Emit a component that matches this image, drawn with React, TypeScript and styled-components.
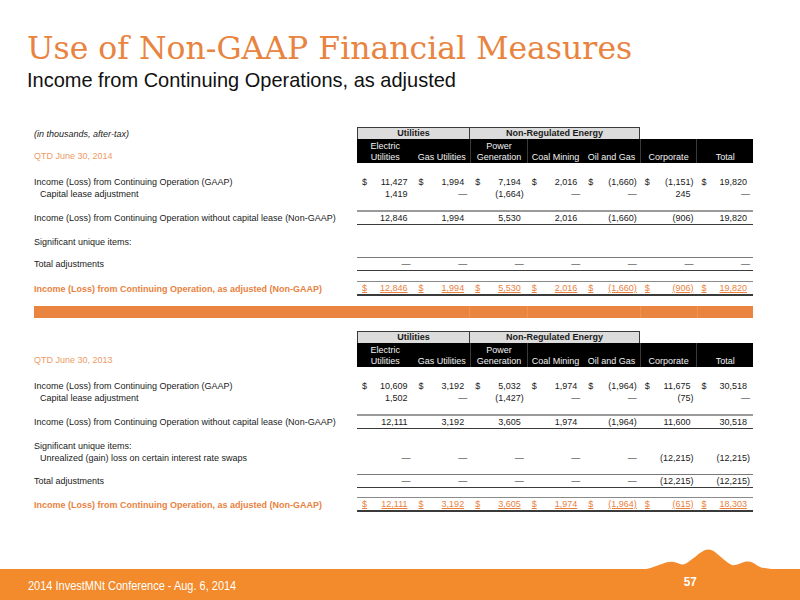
import styled, { createGlobalStyle } from 'styled-components';

const GlobalStyle = createGlobalStyle`
  html, body {
    margin: 0;
    padding: 0;
    background: #ffffff;
  }
  body {
    font-family: 'Liberation Sans', Arial, sans-serif;
  }
`;

type Kind = 'plain' | 'subtotal' | 'adjust' | 'total';

interface Line {
	label: string;
	values?: string[];
	dollar?: boolean;
	kind?: Kind;
	indent?: boolean;
	gap?: number;
}

interface Section {
	note?: string;
	period: string;
	lines: Line[];
}

const dash = '—';
const blanks = [dash, dash, dash, dash, dash, dash, dash];

const sections: Section[] = [
	{
		note: '(in thousands, after-tax)',
		period: 'QTD June 30, 2014',
		lines: [
			{
				label: 'Income (Loss) from Continuing Operation (GAAP)',
				values: ['11,427', '1,994', '7,194', '2,016', '(1,660)', '(1,151)', '19,820'],
				dollar: true,
				gap: 13,
			},
			{
				label: 'Capital lease adjustment',
				values: ['1,419', dash, '(1,664)', dash, dash, '245', dash],
				indent: true,
			},
			{
				label: 'Income (Loss) from Continuing Operation without capital lease (Non-GAAP)',
				values: ['12,846', '1,994', '5,530', '2,016', '(1,660)', '(906)', '19,820'],
				kind: 'subtotal',
				gap: 10,
			},
			{ label: 'Significant unique items:', gap: 13 },
			{ label: 'Total adjustments', values: blanks, kind: 'adjust', gap: 9 },
			{
				label: 'Income (Loss) from Continuing Operation, as adjusted (Non-GAAP)',
				values: ['12,846', '1,994', '5,530', '2,016', '(1,660)', '(906)', '19,820'],
				dollar: true,
				kind: 'total',
				gap: 11,
			},
		],
	},
	{
		period: 'QTD June 30, 2013',
		lines: [
			{
				label: 'Income (Loss) from Continuing Operation (GAAP)',
				values: ['10,609', '3,192', '5,032', '1,974', '(1,964)', '11,675', '30,518'],
				dollar: true,
				gap: 13,
			},
			{
				label: 'Capital lease adjustment',
				values: ['1,502', dash, '(1,427)', dash, dash, '(75)', dash],
				indent: true,
			},
			{
				label: 'Income (Loss) from Continuing Operation without capital lease (Non-GAAP)',
				values: ['12,111', '3,192', '3,605', '1,974', '(1,964)', '11,600', '30,518'],
				kind: 'subtotal',
				gap: 10,
			},
			{ label: 'Significant unique items:', gap: 13 },
			{
				label: 'Unrealized (gain) loss on certain interest rate swaps',
				values: [dash, dash, dash, dash, dash, '(12,215)', '(12,215)'],
				indent: true,
			},
			{
				label: 'Total adjustments',
				values: [dash, dash, dash, dash, dash, '(12,215)', '(12,215)'],
				kind: 'adjust',
				gap: 10,
			},
			{
				label: 'Income (Loss) from Continuing Operation, as adjusted (Non-GAAP)',
				values: ['12,111', '3,192', '3,605', '1,974', '(1,964)', '(615)', '18,303'],
				dollar: true,
				kind: 'total',
				gap: 10,
			},
		],
	},
];

const columns = [
	['Electric', 'Utilities'],
	['', 'Gas Utilities'],
	['Power', 'Generation'],
	['', 'Coal Mining'],
	['', 'Oil and Gas'],
	['', 'Corporate'],
	['', 'Total'],
];

// columns that start a new block get a faint divider
const divided = [2, 3, 5, 6];

const Money = ({ value, dollar }: { value: string; dollar?: boolean }) => (
	<Cell>
		<Dollar>{dollar ? '$' : ''}</Dollar>
		<Amount $paren={value.endsWith(')') || value === dash}>{value}</Amount>
	</Cell>
);

const TableSection = ({ section }: { section: Section }) => (
	<SectionBox>
		<GroupRow>
			<Note>{section.note}</Note>
			<GroupCell $span={2}>Utilities</GroupCell>
			<GroupCell $span={3}>Non-Regulated Energy</GroupCell>
		</GroupRow>
		<HeadRow>
			<Period>{section.period}</Period>
			{columns.map((c, i) => (
				<HeadCell key={c[1]} $divided={divided.includes(i)}>
					<span>{c[0] || '\u00a0'}</span>
					<span>{c[1]}</span>
				</HeadCell>
			))}
		</HeadRow>
		{section.lines.map((line) => (
			<DataRow key={line.label} $kind={line.kind || 'plain'} style={{ marginTop: line.gap || 0 }}>
				<Label $indent={line.indent} $total={line.kind === 'total'}>
					{line.label}
				</Label>
				{line.values?.map((v, i) => (
					<Money key={i} value={v} dollar={line.dollar} />
				))}
			</DataRow>
		))}
	</SectionBox>
);

const App = () => (
	<>
		<GlobalStyle />
		<Page>
			<Header>
				<Title>Use of Non-GAAP Financial Measures</Title>
				<Subtitle>Income from Continuing Operations, as adjusted</Subtitle>
			</Header>
			<Table>
				<TableSection section={sections[0]} />
				<Divider>
					{[0, 1, 2, 3, 4].map((i) => (
						<DividerPart key={i} $first={i === 0} />
					))}
				</Divider>
				<TableSection section={sections[1]} />
			</Table>
			<Footer>
				<Mountain viewBox="620 544 180 26" width="180" height="26">
					<path
						d="M620 571 L640 570 C650 569 655 566 662 564 C667 562 672 561 676 562.5 C680 564 682 565.5 686 563.5 C692 560 699 553 704 550.5 C708 548.5 712 549.5 715 552 C720 556 727 563 732 565 C736 566 741 562.5 746 561.5 C751 561 754 563 758 566 C763 569 775 570 800 570 L800 571 Z"
						fill="#F38A2B"
					/>
				</Mountain>
				<FooterText>2014 InvestMNt Conference - Aug. 6, 2014</FooterText>
				<PageNo>57</PageNo>
			</Footer>
		</Page>
	</>
);

const Page = styled.div`
	width: 800px;
	height: 600px;
	display: flex;
	flex-direction: column;
	overflow: hidden;
`;

const Header = styled.header`
	padding: 30px 0 0 27px;
`;

const Title = styled.h1`
	margin: 0;
	font-family: 'DejaVu Serif', serif;
	font-weight: normal;
	font-size: 31.5px;
	line-height: 36px;
	color: #e8843f;
`;

const Subtitle = styled.h2`
	margin: 2px 0 0;
	font-family: 'Liberation Sans', sans-serif;
	font-weight: normal;
	font-size: 21px;
	line-height: 24px;
	color: #111111;
	transform: scaleX(0.952);
	transform-origin: left center;
`;

const Table = styled.div`
	margin: 35px 0 0 34px;
	width: 719px;
	display: flex;
	flex-direction: column;
	font-size: 9px;
	color: #1a1a1a;
`;

const SectionBox = styled.div`
	display: flex;
	flex-direction: column;
`;

const Grid = styled.div`
	display: grid;
	grid-template-columns: 323px repeat(7, 1fr);
`;

const GroupRow = styled(Grid)`
	height: 12px;
`;

const Note = styled.div`
	font-style: italic;
	line-height: 14px;
`;

const GroupCell = styled.div<{ $span: number }>`
	grid-column: span ${(p) => p.$span};
	background: #dcdcdc;
	border: 1.5px solid #3a3a3a;
	border-bottom: none;
	font-weight: bold;
	text-align: center;
	line-height: 11px;
	& + & {
		border-left: none;
	}
`;

const HeadRow = styled(Grid)`
	height: 24px;
`;

const Period = styled.div`
	align-self: end;
	color: #ee9a66;
	line-height: 11px;
	padding-bottom: 1px;
`;

const HeadCell = styled.div<{ $divided: boolean }>`
	background: #000000;
	color: #f2f2f2;
	display: flex;
	flex-direction: column;
	justify-content: flex-end;
	align-items: center;
	line-height: 11px;
	white-space: nowrap;
	border-left: ${(p) => (p.$divided ? '1px solid #3a3a3a' : 'none')};
`;

const borders: Record<Kind, string> = {
	plain: 'border: none;',
	subtotal: 'border-top: 2px solid #9a9a9a; border-bottom: 1px solid #3a3a3a;',
	adjust: 'border-top: 1.5px solid #7a7a7a; border-bottom: 1px solid #3a3a3a;',
	total: 'border-top: 1.5px solid #8a8a8a; border-bottom: 2.5px solid #3a3a3a;',
};

const DataRow = styled(Grid)<{ $kind: Kind }>`
	height: ${(p) => (p.$kind === 'plain' ? '12px' : '13px')};
	line-height: 12px;
	color: ${(p) => (p.$kind === 'total' ? '#e8823f' : '#1a1a1a')};

	& > div + div {
		${(p) => borders[p.$kind]}
		box-sizing: border-box;
		text-decoration: ${(p) => (p.$kind === 'total' ? 'underline' : 'none')};
	}
`;

const Label = styled.div<{ $indent?: boolean; $total?: boolean }>`
	padding-left: ${(p) => (p.$indent ? '6px' : '0')};
	font-weight: ${(p) => (p.$total ? 'bold' : 'normal')};
	white-space: nowrap;
	align-self: center;
`;

const Cell = styled.div`
	display: flex;
	justify-content: space-between;
	align-items: center;
	white-space: nowrap;
`;

const Dollar = styled.span`
	padding-left: 5px;
`;

const Amount = styled.span<{ $paren: boolean }>`
	padding-right: ${(p) => (p.$paren ? '3px' : '6px')};
`;

const Divider = styled.div`
	margin: 12px 0 13px;
	height: 12px;
	display: grid;
	grid-template-columns: 435px 58px 113px 57px 56px;
	background: #ea8441;
`;

const DividerPart = styled.div<{ $first: boolean }>`
	border-left: ${(p) => (p.$first ? 'none' : '1px solid rgba(255, 255, 255, 0.12)')};
`;

const Footer = styled.footer`
	margin-top: auto;
	position: relative;
	height: 31px;
	background: #f38a2b;
	display: flex;
	align-items: center;
	padding: 0 103px 0 28px;
	color: #ffffff;
`;

const Mountain = styled.svg`
	position: absolute;
	right: 0;
	bottom: calc(100% - 1px);
	display: block;
`;

const FooterText = styled.span`
	font-family: 'Liberation Sans', sans-serif;
	font-size: 13px;
	margin-top: 2px;
	transform: scaleX(0.845);
	transform-origin: left center;
	white-space: nowrap;
`;

const PageNo = styled.span`
	margin-left: auto;
	margin-top: -6px;
	font-family: 'Liberation Sans', sans-serif;
	font-weight: bold;
	font-size: 13px;
	transform: scaleX(0.9);
`;

export default App;
